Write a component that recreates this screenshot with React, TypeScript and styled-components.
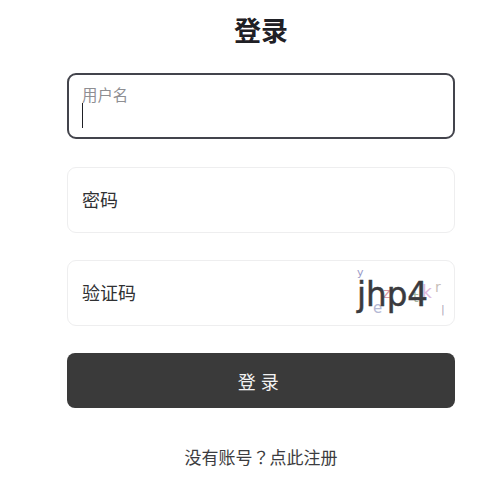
import React from "react";
import styled, { createGlobalStyle } from "styled-components";

const GlobalStyle = createGlobalStyle`
  html, body {
    margin: 0;
    padding: 0;
    background: #fff;
    font-family: "Noto Sans CJK SC", "Liberation Sans", sans-serif;
  }
`;

const App: React.FC = () => {
  return (
    <Page>
      <GlobalStyle />
      <Title>登录</Title>
      <Form>
        <Field $focused>
          <FloatLabel>用户名</FloatLabel>
          <Caret />
        </Field>
        <Field>
          <Label>密码</Label>
        </Field>
        <Field>
          <Label>验证码</Label>
          <Captcha viewBox="0 0 95 60" aria-label="验证码图片">
            <text x="6" y="10" fontSize="11" fill="#9a9ac8">y</text>
            <text x="22" y="47" fontSize="15" fill="#b4b8d4">e</text>
            <text x="71" y="32" fontSize="17" fill="#e0b8dc">k</text>
            <text x="84" y="26" fontSize="14" fill="#c8c0b8">r</text>
            <text x="90" y="47" fontSize="11" fill="#b0a8b8">|</text>
            <text x="32" y="32" fontSize="14" fill="#d89aa8">z</text>
            <text x="62" y="36" fontSize="14" fill="#a8b8a0">t</text>
            <CaptchaCode x="6" y="40" fontSize="34" textLength="71" lengthAdjust="spacingAndGlyphs">
              jhp4
            </CaptchaCode>
          </Captcha>
        </Field>
        <SubmitButton type="button">登 录</SubmitButton>
      </Form>
      <Footer>
        没有账号<Question>？</Question>点此注册
      </Footer>
    </Page>
  );
};

export default App;

const Page = styled.div`
  width: 500px;
  height: 500px;
  box-sizing: border-box;
  padding: 11px 0 0 22px;
  display: flex;
  flex-direction: column;
  align-items: center;
`;

const Title = styled.h1`
  margin: 0;
  font-size: 27px;
  line-height: 38px;
  font-weight: 700;
  color: #1f2025;
`;

const Form = styled.div`
  width: 388px;
  margin-top: 24.2px;
  display: flex;
  flex-direction: column;
  gap: 27.4px;
`;

const Field = styled.div<{ $focused?: boolean }>`
  position: relative;
  height: 66px;
  box-sizing: border-box;
  padding: 0 14px 2px;
  display: flex;
  align-items: center;
  border-radius: 9px;
  border: ${(p) => (p.$focused ? "2px solid #43444c" : "1px solid #eeeeef")};
  background: #fff;
`;

const Label = styled.span`
  font-size: 18px;
  color: #303133;
`;

const FloatLabel = styled.span`
  position: absolute;
  left: 13px;
  top: 8px;
  font-size: 15.4px;
  line-height: 22px;
  color: #8e8e92;
`;

const Caret = styled.span`
  position: absolute;
  left: 13px;
  top: 28px;
  width: 1px;
  height: 25px;
  background: #1f2025;
`;

const Captcha = styled.svg`
  position: absolute;
  right: 8px;
  top: 5px;
  width: 95px;
  height: 60px;
  font-family: "DejaVu Sans", sans-serif;
`;

const CaptchaCode = styled.text`
  fill: #3a3a3e;
  stroke: #3a3a3e;
  stroke-width: 0.5px;
`;

const SubmitButton = styled.button`
  height: 55px;
  padding: 0 5px 0 0;
  border: none;
  border-radius: 8px;
  background: #3a3a3a;
  color: #f2f2f2;
  font-family: inherit;
  font-size: 18px;
  letter-spacing: 0.5px;
`;

const Footer = styled.div`
  margin-top: 36px;
  font-size: 17px;
  line-height: 26px;
  color: #3c3c40;
`;

const Question = styled.span`
  font-family: "Noto Sans CJK TC", sans-serif;
`;
